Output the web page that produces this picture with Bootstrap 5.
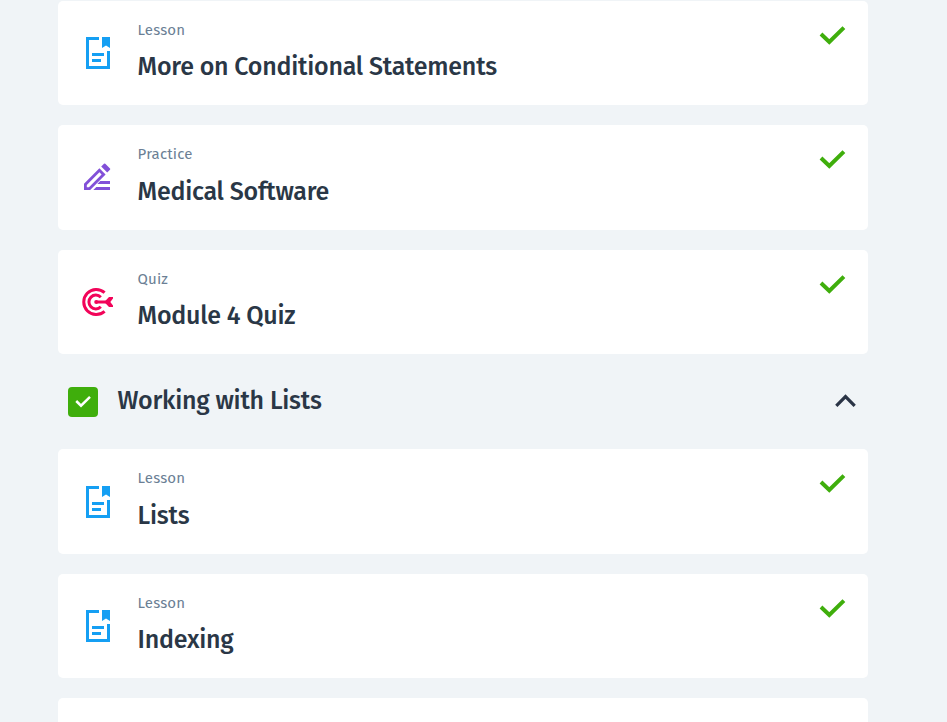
<!DOCTYPE html>
<html lang="en">
<head>
<meta charset="utf-8">
<meta name="viewport" content="width=device-width, initial-scale=1">
<title>Course modules</title>
<link href="https://cdn.jsdelivr.net/npm/bootstrap@5.3.0/dist/css/bootstrap.min.css" rel="stylesheet">
<style>
body{background:#f0f4f7;font-family:"Fira Sans","Noto Sans","Open Sans",sans-serif;color:#2a3746}
.course{width:810px;height:722px;overflow:hidden;margin-left:58px;padding-top:.8px}
.step{height:104.5px;margin-bottom:20px;border-radius:5px;padding:0 20px}
.step:last-child{height:24px;margin-bottom:0;border-radius:5px 5px 0 0}
.step-icon{width:40px;height:40px;margin-top:32.4px;flex:none}
.label-col{margin-left:19.6px}
.kind{font-size:15px;line-height:20px;letter-spacing:.15px;color:#6b7f95;margin-top:19px}
.title{font-size:25px;line-height:34px;font-weight:500;letter-spacing:-.23px;margin-top:0;margin-bottom:0;white-space:nowrap}
.kind+.title{margin-top:10.4px}
.done{width:30px;height:30px;margin-top:19px;flex:none}
.section-head{height:95px;margin-top:-20px;padding:0 10px}
.section-head .title{margin-top:-2px}
.box{width:30px;height:30px;border-radius:4px;background:#3fae0c}
</style>
<script src="https://cdn.jsdelivr.net/npm/bootstrap@5.3.0/dist/js/bootstrap.bundle.min.js"></script>
</head>
<body class="vh-100 overflow-hidden">
<svg class="d-none">
<symbol id="lesson" viewBox="0 0 40 40"><g fill="#159ff3"><path d="M8 4H21V7H11V33H29V18H32V36H8ZM14 20H26V23H14ZM14 26H23V29H14ZM24 4H32V15L28 12.5L24 15Z"/></g></symbol>
<symbol id="practice" viewBox="0 0 40 40"><g fill="#8250d8"><path fill-rule="evenodd" d="M6 32V25.7L21.4 10.3L27.6 16.5L12.2 32ZM8.8 29.2H11L23.6 16.5L21.4 14.3L8.8 26.9Z"/><path d="M23.2 8.6L26 5.8Q26.6 5.2 27.3 5.8L32 10.5Q32.6 11.1 32 11.8L29.2 14.6ZM22.3 23H32V26H19.3ZM18.3 29H32V32H15.3Z"/></g></symbol>
<symbol id="quiz" viewBox="0 0 40 40"><g fill="none" stroke="#f20459" stroke-width="3"><path d="M26.6 10.7A12.5 12.5 0 1 0 26.6 29.3"/><path d="M22.8 15.2A6.9 6.9 0 1 0 22.8 24.8"/><path d="M18 20H31"/></g><circle cx="18.2" cy="20" r="2" fill="#f20459"/><path fill="#f20459" d="M26.3 20L31 15H35V16.5L32.3 20L35 23.5V25H31Z"/></symbol>
<symbol id="tick" viewBox="0 0 30 30"><path d="M3 14L11.3 22L25.9 7.6" fill="none" stroke="#3fae0c" stroke-width="4"/></symbol>
</svg>
<main class="course">
<article class="step bg-white d-flex"><svg class="step-icon"><use href="#lesson"/></svg><div class="label-col flex-grow-1"><div class="kind">Lesson</div><h2 class="title">More on Conditional Statements</h2></div><svg class="done"><use href="#tick"/></svg></article>
<article class="step bg-white d-flex"><svg class="step-icon"><use href="#practice"/></svg><div class="label-col flex-grow-1"><div class="kind">Practice</div><h2 class="title">Medical Software</h2></div><svg class="done"><use href="#tick"/></svg></article>
<article class="step bg-white d-flex"><svg class="step-icon"><use href="#quiz"/></svg><div class="label-col flex-grow-1"><div class="kind">Quiz</div><h2 class="title">Module 4 Quiz</h2></div><svg class="done"><use href="#tick"/></svg></article>
<header class="section-head d-flex align-items-center"><span class="box d-flex"><svg width="30" height="30" viewBox="0 0 30 30"><path d="M8.2 14L13 18.7L22 9.8" fill="none" stroke="#fff" stroke-width="2.5"/></svg></span><div class="label-col flex-grow-1"><h2 class="title">Working with Lists</h2></div><svg width="25" height="30" viewBox="0 0 25 30"><path d="M3.3 18.8L12.5 9.6L21.7 18.8" fill="none" stroke="#2a3446" stroke-width="3.2"/></svg></header>
<article class="step bg-white d-flex"><svg class="step-icon"><use href="#lesson"/></svg><div class="label-col flex-grow-1"><div class="kind">Lesson</div><h2 class="title">Lists</h2></div><svg class="done"><use href="#tick"/></svg></article>
<article class="step bg-white d-flex"><svg class="step-icon"><use href="#lesson"/></svg><div class="label-col flex-grow-1"><div class="kind">Lesson</div><h2 class="title">Indexing</h2></div><svg class="done"><use href="#tick"/></svg></article>
<article class="step bg-white"></article>
</main>
</body>
</html>
